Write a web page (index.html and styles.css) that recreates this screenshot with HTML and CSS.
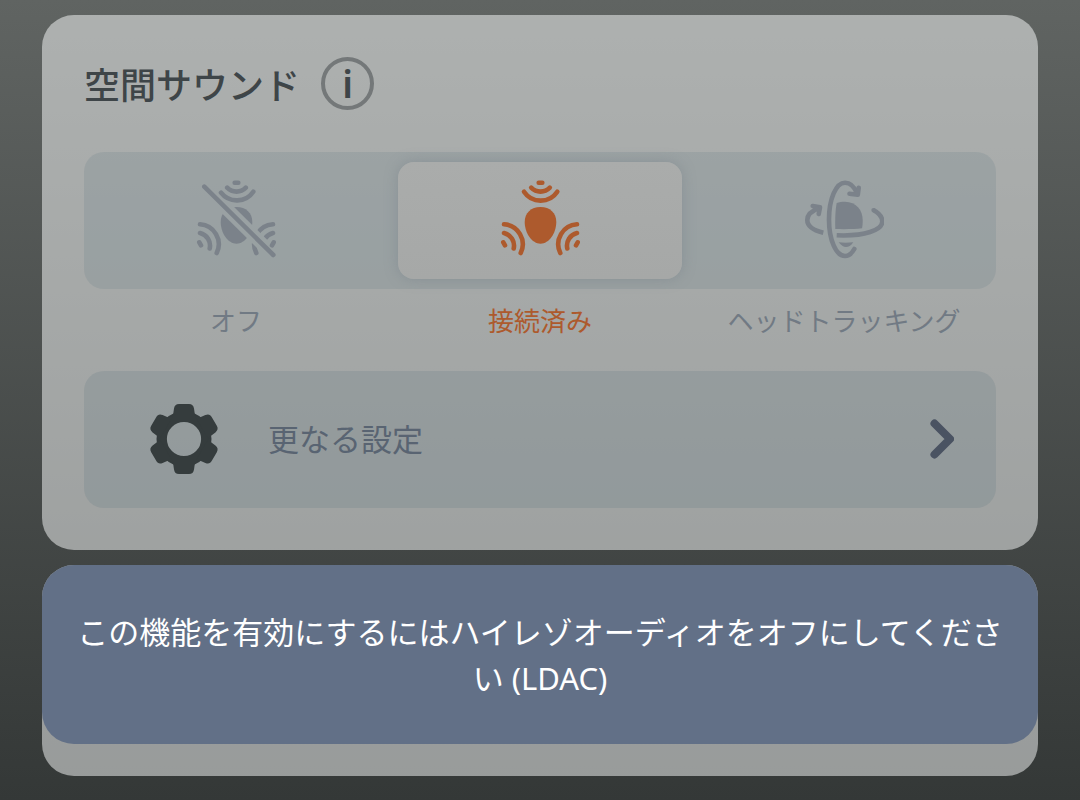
FILE: index.html
```html
<!DOCTYPE html>
<html lang="ja">
<head>
    <meta charset="UTF-8">
    <meta name="viewport" content="width=device-width, initial-scale=1.0">
    <title>空間サウンド</title>
    <link rel="stylesheet" href="styles.css">
</head>
<body>
    <main class="container">
        <section class="card">
            <div class="card-header">
                <h2>空間サウンド</h2>
                <button type="button" class="info">i</button>
            </div>

            <div class="modes">
                <label class="mode">
                    <input type="radio" name="mode" id="mode-off">
                    <svg class="mode-icon" viewBox="0 0 80 80">
                        <mask id="cut">
                            <rect width="80" height="80" fill="#fff"/>
                            <path d="M0 -1.5L85.6 83.2" stroke="#000" stroke-width="13"/>
                        </mask>
                        <g mask="url(#cut)">
                            <path class="fill" d="M40.5 27C50 27 56.3 33 56.3 42C56.3 53 49 63.7 40.5 63.7C32 63.7 24.7 53 24.7 42C24.7 33 31 27 40.5 27Z"/>
                            <path class="line" d="M4 44.3A20 20 0 0 1 20.7 73M4 53A13 13 0 0 1 13.7 68.5M3.3 62.3l1.7 3"/>
                            <path class="line" d="M77 44.3A20 20 0 0 0 60.3 73M77 53A13 13 0 0 0 67.3 68.5"/>
                        </g>
                        <path class="line" d="M38.7 2.7h3.6M31.2 7.7A13 13 0 0 0 49.8 7.7M25 12.7A20 20 0 0 0 57.3 11.7M77.7 62.3l-1.7 3"/>
                        <path class="line" d="M8.3 6.7L77.3 75"/>
                    </svg>
                </label>
                <label class="mode">
                    <input type="radio" name="mode" id="mode-fixed" checked>
                    <svg class="mode-icon" viewBox="0 0 80 80">
                        <path class="fill" d="M40.5 27C50 27 56.3 33 56.3 42C56.3 53 49 63.7 40.5 63.7C32 63.7 24.7 53 24.7 42C24.7 33 31 27 40.5 27Z"/>
                        <path class="line" d="M38.7 2.7h3.6M31.2 7.7A13 13 0 0 0 49.8 7.7M24 11.7A20 20 0 0 0 57.3 11.7"/>
                        <path class="line" d="M4 44.3A20 20 0 0 1 20.7 73M4 53A13 13 0 0 1 13.7 68.5M3.3 62.3l1.7 3"/>
                        <path class="line" d="M77 44.3A20 20 0 0 0 60.3 73M77 53A13 13 0 0 0 67.3 68.5M77.7 62.3l-1.7 3"/>
                    </svg>
                </label>
                <label class="mode">
                    <input type="radio" name="mode" id="mode-head">
                    <svg class="mode-icon" viewBox="-1 0 80 80">
                        <path class="fill" d="M30.3 49C30 40 30.3 30 31.7 23C34 22 37 21.7 40 21.7C51 21.7 57.7 30 57.7 40C57.7 43 57.5 46 57 48.3C50 49.2 38 49.3 30.3 49Z"/>
                        <path class="fill" d="M33.7 62.3C39 62.9 43 62.8 48.3 62.2C46 65.5 43.5 67 41 67S36 65.5 33.7 62.3Z"/>
                        <path class="line" d="M49.3 69C46.5 74 43.5 76 40 76C31 76 24 60 24 39.5S31 2.7 40 2.7C45 2.7 49 6 51.8 13"/>
                        <path class="line" d="M53.7 7.7L52.8 14.7L44.5 13.7M7.7 26L15 27.3L13.7 34"/>
                        <path class="line flat" d="M14 28C6 31 2.3 35 2.3 40C2.3 46 9 50.5 18.3 52.7"/>
                        <path class="line flat" d="M68.3 30C74 33 77.3 37 77.3 41.5C77.3 50 60 56.5 31.7 55.3"/>
                        <circle class="fill" cx="68.5" cy="30.1" r="2.2"/>
                    </svg>
                </label>
            </div>
            <div class="mode-names">
                <label for="mode-off">オフ</label>
                <label for="mode-fixed" class="active">接続済み</label>
                <label for="mode-head">ヘッドトラッキング</label>
            </div>

            <button type="button" class="more">
                <svg class="gear" viewBox="0 0 72 72">
                    <defs>
                        <path id="tooth" d="M31 1h10c3 0 4.5 1.5 5 4.5l.8 5.5l4 4h-29.6l4-4l.8-5.5c.5-3 2-4.5 5-4.5z"/>
                    </defs>
                    <circle cx="36" cy="36" r="22.3" fill="none" stroke="#353c3d" stroke-width="10.4"/>
                    <use href="#tooth"/>
                    <use href="#tooth" transform="rotate(60 36 36)"/>
                    <use href="#tooth" transform="rotate(120 36 36)"/>
                    <use href="#tooth" transform="rotate(180 36 36)"/>
                    <use href="#tooth" transform="rotate(240 36 36)"/>
                    <use href="#tooth" transform="rotate(300 36 36)"/>
                </svg>
                <span class="more-text">更なる設定</span>
                <svg class="chevron" viewBox="0 0 24 40">
                    <path d="M4.5 4.5L20 20L4.5 35.5"/>
                </svg>
            </button>
        </section>

        <section class="card-below">
            <p class="toast" role="status">この機能を有効にするにはハイレゾオーディオをオフにしてください (LDAC)</p>
        </section>
    </main>
</body>
</html>
```
FILE: styles.css
```css
* {
    box-sizing: border-box;
}
html {
    min-height: 100%;
    background: linear-gradient(#606462, #343837);
}
body {
    margin: 0;
    font-family: "Noto Sans", "Noto Sans CJK JP", sans-serif;
}
button {
    border: none;
    padding: 0;
    font-family: inherit;
    cursor: pointer;
}
.container {
    display: flex;
    flex-direction: column;
    gap: 15px;
    padding: 15px 42px 24px;
}
.card, .card-below {
    border-radius: 32px;
    background-color: rgba(252, 254, 253, 0.5);
}
.card {
    padding: 42px;
}
.card-header {
    display: flex;
    align-items: center;
    gap: 21px;
    margin-bottom: 42px;
}
h2 {
    margin: 0;
    font-family: "Noto Sans CJK JP", sans-serif;
    font-size: 36px;
    font-weight: 500;
    line-height: 53px;
    color: #3e4548;
}
.info {
    width: 53px;
    height: 53px;
    border: 4px solid #747879;
    border-radius: 50%;
    background: none;
    font-size: 38px;
    font-weight: 600;
    line-height: 44px;
    padding-bottom: 1px;
    color: #3e4548;
}
.modes {
    display: grid;
    grid-template-columns: repeat(3, 1fr);
    border-radius: 20px;
    background-color: rgba(120, 138, 144, 0.27);
}
.mode {
    display: flex;
    justify-content: center;
    align-items: center;
    height: 117px;
    margin: 10px;
    padding-bottom: 2px;
    border-radius: 16px;
    color: #7b828a;
    cursor: pointer;
}
.mode:has(input:checked) {
    background: linear-gradient(#aaacab, #a6a8a7);
    box-shadow: 0 0 14px rgba(110, 120, 130, 0.4);
    color: #ad5a2d;
}
.mode input {
    position: absolute;
    opacity: 0;
}
.mode-icon {
    width: 80px;
    height: 80px;
}
.fill {
    fill: currentColor;
}
.line {
    fill: none;
    stroke: currentColor;
    stroke-width: 4.6;
    stroke-linecap: round;
    stroke-linejoin: round;
}
.flat {
    stroke-linecap: butt;
}
.mode-names {
    display: grid;
    grid-template-columns: repeat(3, 1fr);
    padding: 12px 0 30px;
    font-size: 26px;
    line-height: 40px;
    text-align: center;
    color: #717a84;
}
.mode-names .active {
    color: #ad5a2d;
}
.more {
    display: flex;
    align-items: center;
    width: 100%;
    height: 137px;
    padding: 0 42px 1px 64px;
    border-radius: 20px;
    background-color: rgba(112, 130, 138, 0.27);
    color: #596472;
}
.gear {
    width: 72px;
    height: 72px;
    margin-right: 48px;
    fill: #353c3d;
}
.more-text {
    flex: 1;
    font-size: 31px;
    line-height: 46px;
    text-align: left;
}
.chevron {
    width: 24px;
    height: 40px;
    fill: none;
    stroke: #4a5362;
    stroke-width: 8;
    stroke-linecap: round;
    stroke-linejoin: round;
}
.card-below {
    padding-bottom: 32px;
}
.toast {
    margin: 0;
    padding: 44px 24px 43px;
    border-radius: 32px;
    background-color: #627087;
    font-size: 31px;
    line-height: 46px;
    text-align: center;
    color: #fff;
}
```
